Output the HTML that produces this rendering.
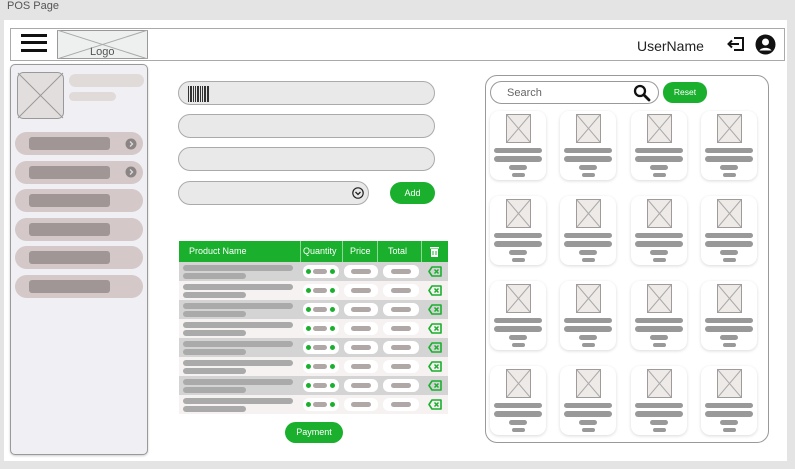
<!DOCTYPE html><html><head><meta charset="utf-8"><style>
*{box-sizing:border-box;margin:0;padding:0}
body{width:795px;height:469px;background:#e4e4e4;position:relative;overflow:hidden;font-family:"Liberation Sans",sans-serif}
.a{position:absolute}
.pill{position:absolute;border-radius:12px}
.card{position:absolute;width:56px;height:69px;background:#fff;border-radius:9px;box-shadow:0 1px 3px rgba(0,0,0,.15)}
.card .im{position:absolute;left:16px;top:3px;width:25px;height:29px}
.card .b{position:absolute;background:#999;border-radius:3px}
.row{position:absolute;left:179px;width:269px;height:19px}
.row .n1{position:absolute;left:4px;top:3px;width:110px;height:6px;background:#aaa;border-radius:3px}
.row .n2{position:absolute;left:4px;top:11px;width:63px;height:6px;background:#aaa;border-radius:3px}
.row .w{position:absolute;top:3px;height:13px;background:#fff;border-radius:6px}
.row .g{position:absolute;top:7px;width:5px;height:5px;border-radius:50%;background:#1ab02e}
.row .s{position:absolute;top:7px;height:5px;background:#b0a8a6;border-radius:3px}
</style></head><body>
<div class="a" style="left:7px;top:0;font-size:11px;color:#555">POS Page</div>
<div class="a" style="left:4px;top:20px;width:783px;height:441px;background:#fff"></div>
<div class="a" style="left:10px;top:28px;width:775px;height:33px;border:1px solid #aaa;background:#fff"></div>
<div class="a" style="left:21px;top:34px;width:26px;height:3px;background:#111"></div>
<div class="a" style="left:21px;top:41px;width:26px;height:3px;background:#111"></div>
<div class="a" style="left:21px;top:49px;width:26px;height:3px;background:#111"></div>
<svg class="a" style="left:57px;top:30px" width="91" height="29"><rect x=".5" y=".5" width="90" height="28" fill="#edf0ee" stroke="#999"/><line x1="0" y1="0" x2="91" y2="29" stroke="#aaa"/><line x1="91" y1="0" x2="0" y2="29" stroke="#aaa"/><text x="33" y="25" font-size="11" fill="#555" font-family="Liberation Sans">Logo</text></svg>
<div class="a" style="left:637px;top:38px;font-size:14px;color:#222">UserName</div>
<svg class="a" style="left:727px;top:35px" width="20" height="18"><path d="M7 3h9v12H7" fill="none" stroke="#111" stroke-width="2"/><path d="M12 9H2M5 5.5L1.5 9 5 12.5" fill="none" stroke="#111" stroke-width="2"/></svg>
<svg class="a" style="left:755px;top:34px" width="21" height="21"><circle cx="10.5" cy="10.5" r="10" fill="#111"/><circle cx="10.5" cy="8" r="3.5" fill="#fff"/><path d="M4.5 16.5c2-3.5 10-3.5 12 0" fill="#fff"/></svg>
<div class="a" style="left:10px;top:64px;width:138px;height:391px;background:#efeff4;border:1px solid #999;border-radius:5px;box-shadow:0 1px 2px rgba(0,0,0,.2)"></div>
<svg class="a" style="left:17px;top:72px" width="47" height="47"><rect x=".5" y=".5" width="46" height="46" rx="6" fill="#e2dedd" stroke="#999"/><line x1="1" y1="1" x2="46" y2="46" stroke="#999"/><line x1="46" y1="1" x2="1" y2="46" stroke="#999"/></svg>
<div class="pill" style="left:69px;top:74px;width:75px;height:13px;background:#e0dad9;border-radius:7px"></div>
<div class="pill" style="left:69px;top:92px;width:47px;height:9px;background:#e0dad9;border-radius:5px"></div>
<div class="pill" style="left:15px;top:132px;width:128px;height:23px;background:#d4c8c8"></div>
<div class="pill" style="left:15px;top:161px;width:128px;height:23px;background:#d4c8c8"></div>
<div class="pill" style="left:15px;top:189px;width:128px;height:23px;background:#d4c8c8"></div>
<div class="pill" style="left:15px;top:218px;width:128px;height:23px;background:#d4c8c8"></div>
<div class="pill" style="left:15px;top:246px;width:128px;height:23px;background:#d4c8c8"></div>
<div class="pill" style="left:15px;top:275px;width:128px;height:23px;background:#d4c8c8"></div>
<div class="a" style="left:29px;top:137px;width:81px;height:13px;background:#a09696;border-radius:3px"></div>
<div class="a" style="left:29px;top:166px;width:81px;height:13px;background:#a09696;border-radius:3px"></div>
<div class="a" style="left:29px;top:194px;width:81px;height:13px;background:#a09696;border-radius:3px"></div>
<div class="a" style="left:29px;top:223px;width:81px;height:13px;background:#a09696;border-radius:3px"></div>
<div class="a" style="left:29px;top:251px;width:81px;height:13px;background:#a09696;border-radius:3px"></div>
<div class="a" style="left:29px;top:280px;width:81px;height:13px;background:#a09696;border-radius:3px"></div>
<svg class="a" style="left:125px;top:138px" width="12" height="12"><circle cx="6" cy="6" r="5.5" fill="#8a8484"/><path d="M5 3.5L7.5 6 5 8.5" fill="none" stroke="#ddd" stroke-width="1.3"/></svg>
<svg class="a" style="left:125px;top:166px" width="12" height="12"><circle cx="6" cy="6" r="5.5" fill="#8a8484"/><path d="M5 3.5L7.5 6 5 8.5" fill="none" stroke="#ddd" stroke-width="1.3"/></svg>
<div class="pill" style="left:178px;top:81px;width:257px;height:24px;background:#e9e9e9;border:1px solid #aaa"></div>
<svg class="a" style="left:188px;top:86px" width="22" height="16"><g fill="#333"><rect x="0" y="0" width="1" height="16"/><rect x="2" y="0" width="2" height="16"/><rect x="5" y="0" width="1" height="16"/><rect x="7" y="0" width="1" height="16"/><rect x="9" y="0" width="2" height="16"/><rect x="12" y="0" width="1" height="16"/><rect x="14" y="0" width="1" height="16"/><rect x="16" y="0" width="2" height="16"/><rect x="19" y="0" width="2" height="16"/></g></svg>
<div class="pill" style="left:178px;top:114px;width:257px;height:24px;background:#e9e9e9;border:1px solid #aaa"></div>
<div class="pill" style="left:178px;top:147px;width:257px;height:24px;background:#e9e9e9;border:1px solid #aaa"></div>
<div class="pill" style="left:178px;top:181px;width:191px;height:24px;background:#e9e9e9;border:1px solid #aaa"></div>
<svg class="a" style="left:352px;top:187px" width="12" height="12"><circle cx="6" cy="6" r="5.2" fill="none" stroke="#222" stroke-width="1.2"/><path d="M3.5 5l2.5 2.5L8.5 5" fill="none" stroke="#222" stroke-width="1.3"/></svg>
<div class="pill" style="left:390px;top:182px;width:45px;height:22px;background:#1ab02e;border-radius:11px;color:#fff;font-size:9px;text-align:center;line-height:22px">Add</div>
<div class="a" style="left:179px;top:241px;width:269px;height:21px;background:#1ab02e;color:#fff;font-size:9px;line-height:21px">
<span class="a" style="left:10px">Product Name</span>
<span class="a" style="left:121px;top:0;width:1px;height:21px;background:#8fd89a"></span>
<span class="a" style="left:124px">Quantity</span>
<span class="a" style="left:163px;top:0;width:1px;height:21px;background:#8fd89a"></span>
<span class="a" style="left:171px">Price</span>
<span class="a" style="left:198px;top:0;width:1px;height:21px;background:#8fd89a"></span>
<span class="a" style="left:209px">Total</span>
<span class="a" style="left:242px;top:0;width:1px;height:21px;background:#8fd89a"></span>
<svg class="a" style="left:251px;top:5px" width="9" height="11"><rect x="0" y="1" width="9" height="1.5" fill="#fff"/><rect x="1" y="3" width="7" height="8" fill="#fff"/><path d="M3 5v4M6 5v4" stroke="#1ab02e"/></svg>
</div>
<div id="rows"></div>
<div class="pill" style="left:285px;top:422px;width:58px;height:21px;background:#1ab02e;border-radius:11px;color:#fff;font-size:9px;text-align:center;line-height:21px">Payment</div>
<div class="a" style="left:485px;top:75px;width:284px;height:368px;border:1px solid #999;border-radius:12px;background:#fff"></div>
<div class="pill" style="left:490px;top:81px;width:169px;height:23px;border:1px solid #999;border-radius:12px;background:#fff"></div>
<div class="a" style="left:507px;top:87px;font-size:11px;color:#666">Search</div>
<svg class="a" style="left:633px;top:84px" width="18" height="18"><circle cx="7" cy="7" r="5" fill="none" stroke="#111" stroke-width="2.3"/><path d="M11 11l5 5" stroke="#111" stroke-width="2.8" stroke-linecap="round"/></svg>
<div class="pill" style="left:663px;top:82px;width:44px;height:21px;background:#1ab02e;border-radius:10px;color:#fff;font-size:8.5px;text-align:center;line-height:21px">Reset</div>
<div id="cards"></div>
<script>
var r='';for(var i=0;i<8;i++){var y=262+i*19;var bg=i%2?'#f5f2f1':'#d4d4d4';
r+='<div class="row" style="top:'+y+'px;background:'+bg+'"><div class="n1"></div><div class="n2"></div>'+
'<div class="w" style="left:124px;width:36px"></div><div class="g" style="left:127px"></div><div class="s" style="left:134px;width:14px"></div><div class="g" style="left:151px"></div>'+
'<div class="w" style="left:165px;width:34px"></div><div class="s" style="left:172px;width:20px"></div>'+
'<div class="w" style="left:204px;width:36px"></div><div class="s" style="left:212px;width:20px"></div>'+
'<svg style="position:absolute;left:249px;top:4px" width="14" height="11"><path d="M4 1h9v9H4L1 5.5z" fill="none" stroke="#1ab02e" stroke-width="1.6" stroke-linejoin="round"/><path d="M6.5 3.5l4 4M10.5 3.5l-4 4" stroke="#1ab02e" stroke-width="1.5"/></svg></div>';}
document.getElementById('rows').innerHTML=r;
var c='';var xs=[490,560,631,701],ys=[111,196,281,366];
ys.forEach(function(y){xs.forEach(function(x){c+='<div class="card" style="left:'+x+'px;top:'+y+'px"><svg class="im" width="25" height="29"><rect x=".5" y=".5" width="24" height="28" fill="#eeeae8" stroke="#a09a9a"/><line x1="1" y1="1" x2="24" y2="28" stroke="#aaa"/><line x1="24" y1="1" x2="1" y2="28" stroke="#aaa"/></svg>'+
'<div class="b" style="left:4px;top:37px;width:48px;height:5px"></div><div class="b" style="left:4px;top:45px;width:48px;height:6px"></div><div class="b" style="left:19px;top:54px;width:18px;height:5px"></div><div class="b" style="left:22px;top:62px;width:13px;height:4px"></div></div>';});});
document.getElementById('cards').innerHTML=c;
</script>
</body></html>
